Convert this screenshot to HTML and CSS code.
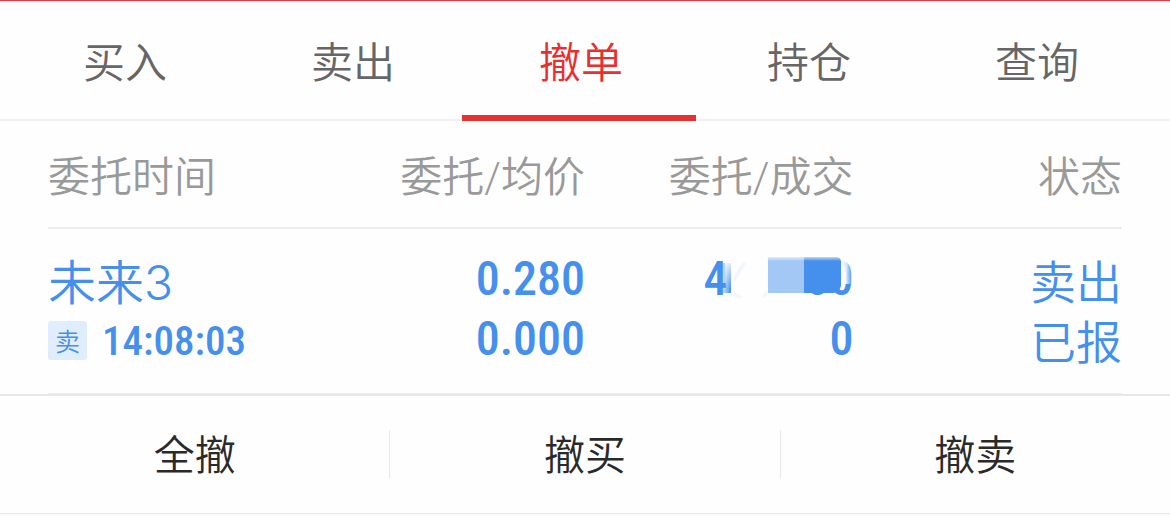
FILE: index.html
```html
<!DOCTYPE html>
<html lang="zh-CN">
<head>
<meta charset="utf-8">
<meta name="viewport" content="width=device-width, initial-scale=1">
<title>撤单</title>
<link rel="stylesheet" href="styles.css">
</head>
<body>
<nav class="tabs">
  <a class="tab" href="#buy">买入</a>
  <a class="tab" href="#sell">卖出</a>
  <a class="tab tab-active" href="#cancel" aria-current="page">撤单</a>
  <a class="tab" href="#positions">持仓</a>
  <a class="tab" href="#query">查询</a>
</nav>
<main class="orders">
  <table class="order-table">
    <thead>
      <tr><th scope="col">委托时间</th><th scope="col">委托/均价</th><th scope="col">委托/成交</th><th scope="col">状态</th></tr>
    </thead>
    <tbody>
      <tr>
        <td>
          <div class="line name">未来3</div>
          <div class="line time"><span class="badge">卖</span><time>14:08:03</time></div>
        </td>
        <td class="number"><div class="line">0.280</div><div class="line">0.000</div></td>
        <td class="number">
          <div class="line">
            <span class="amount"><span>4</span><span>00</span>
              <svg class="mosaic" viewBox="0 0 150 46" aria-hidden="true">
                <defs>
                  <linearGradient id="edge"><stop offset="0" stop-color="#458fed" stop-opacity="0"/><stop offset="1" stop-color="#458fed"/></linearGradient>
                  <linearGradient id="top" x2="0" y2="1"><stop offset="0" stop-color="#fefefe"/><stop offset="1" stop-color="#fefefe" stop-opacity="0"/></linearGradient>
                  <linearGradient id="fade"><stop offset="0" stop-color="#fefefe"/><stop offset=".5" stop-color="#fefefe" stop-opacity=".8"/><stop offset="1" stop-color="#fefefe" stop-opacity="0"/></linearGradient>
                  <filter id="soft"><feGaussianBlur stdDeviation="1"/></filter>
                </defs>
                <path fill="url(#edge)" d="M18 8h11v30H18z"/>
                <path fill="url(#top)" d="M23 2h6v32h-6z"/>
                <path fill="#fefefe" d="M29 0h73v46H29z"/>
                <path d="M43 8q-7 8-11 18M31 38q2 3 8 4M65 36q-1 5-4 5" fill="none" stroke="#e6f0fc" stroke-width="2" filter="url(#soft)"/>
                <path fill="#a4c8f6" d="M66 2h36v36H66z"/>
                <path fill="#458fed" d="M102 2h32q5 0 5 5v24q-2 7-8 7h-29z"/>
                <path fill="url(#top)" d="M66 0h78v6H66z"/>
                <path fill="url(#fade)" d="M139 3h11v26h-11z"/>
              </svg>
            </span>
          </div>
          <div class="line">0</div>
        </td>
        <td class="status"><div class="line">卖出</div><div class="line">已报</div></td>
      </tr>
    </tbody>
  </table>
</main>
<footer class="actions">
  <button type="button">全撤</button>
  <button type="button">撤买</button>
  <button type="button">撤卖</button>
</footer>
</body>
</html>
```
FILE: styles.css
```css
* {
  box-sizing: border-box;
}

body {
  margin: 0;
  background: #fafafa;
  color: #2a2a2a;
  font-family: "Noto Sans CJK SC", sans-serif;
  font-size: 42px;
  font-weight: 350;
  line-height: 60px;
}

.tabs {
  position: relative;
  display: flex;
  padding: 29px 19px 29px 11px;
  border-top: 1px solid #f52d3c;
  border-bottom: 2px solid #f0f0f0;
  background: #fefefe;
}

.tabs::after {
  content: "";
  position: absolute;
  bottom: -2px;
  left: 39.5%;
  width: 20%;
  height: 6px;
  background: #e83030;
}

.tab {
  flex: 1;
  color: #666;
  text-align: center;
  text-decoration: none;
}

.tab-active {
  color: #e83030;
}

.orders {
  padding: 0 48px;
  background: #fefefe;
}

.order-table {
  width: 100%;
  table-layout: fixed;
  border-collapse: separate;
  border-spacing: 0;
}

th,
td {
  padding: 0;
  text-align: right;
}

th:first-child,
td:first-child {
  text-align: left;
}

th {
  padding: 27px 0 19px;
  border-bottom: 2px solid #ececec;
  color: #999;
  font-family: Roboto, "Noto Sans CJK SC", sans-serif;
  font-weight: 350;
}

td {
  padding: 20px 0 24px;
  border-bottom: 1px solid #ececec;
  color: #458fed;
  vertical-align: top;
}

.line {
  height: 60px;
}

.name {
  font-family: Inter, "Noto Sans CJK SC", sans-serif;
  font-size: 48px;
  line-height: 68px;
}

.time {
  display: flex;
  align-items: center;
  gap: 15px;
  padding-top: 3px;
  font-family: "Roboto Condensed", Roboto, sans-serif;
  font-size: 41px;
  font-weight: 500;
}

.badge {
  width: 39px;
  border-radius: 3px;
  background: #e0edfd;
  font-family: "Noto Sans CJK SC", sans-serif;
  font-size: 25px;
  font-weight: 350;
  line-height: 39px;
  text-align: center;
}

.number {
  font-family: "Roboto Condensed", Roboto, sans-serif;
  font-size: 48px;
  font-weight: 500;
}

.status {
  font-size: 46px;
}

.amount {
  position: relative;
  display: inline-flex;
  justify-content: space-between;
  width: 150px;
}

.mosaic {
  position: absolute;
  top: 6px;
  left: -2px;
  width: 150px;
  height: 46px;
}

.actions {
  display: flex;
  padding: 34px 0 35px;
  border-top: 2px solid #e8e8e8;
  border-bottom: 1px solid #e8e8e8;
  background: #fefefe;
}

.actions button {
  flex: 1;
  padding: 0 0 4px;
  border: 0;
  border-right: 1px solid #e8e8e8;
  background: none;
  color: inherit;
  font: inherit;
  font-size: 41px;
  line-height: 44px;
}

.actions button:last-child {
  border-right: 0;
}
```
